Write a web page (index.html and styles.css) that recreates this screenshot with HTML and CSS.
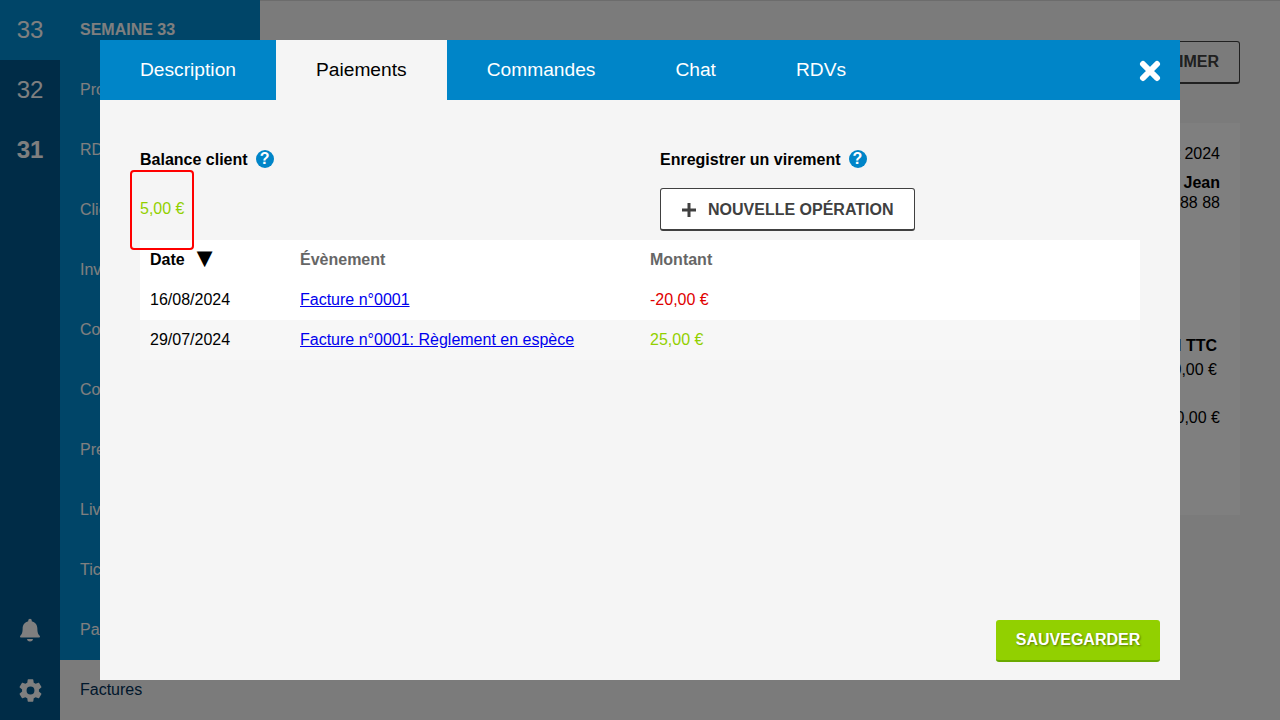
FILE: index.html
```html
<!DOCTYPE html>
<html lang="fr">
<head>
<meta charset="utf-8">
<title>Paiements</title>
<link rel="stylesheet" href="styles.css">
</head>
<body>
<div class="app">
  <aside class="rail">
    <div class="rail-week rail-week-current">33</div>
    <div class="rail-week">32</div>
    <div class="rail-week rail-week-bold">31</div>
    <div class="rail-spacer"></div>
    <div class="rail-icon">
      <svg viewBox="0 0 24 24" width="26" height="26"><path d="M12 1.5a1.6 1.6 0 0 0-1.6 1.6v.8C7.3 4.6 5.2 7.3 5.2 10.6c0 4-.9 5.4-1.9 6.4-.4.4-.5.7-.5 1 0 .6.4 1 1.1 1h16.2c.7 0 1.1-.4 1.1-1 0-.3-.1-.6-.5-1-1-1-1.9-2.4-1.9-6.4 0-3.3-2.1-6-5.200-6.700v-.8A1.600 1.600 0 0 0 12 1.500ZM9.300 20.300a2.700 2.200 0 0 0 5.400 0Z"/></svg>
    </div>
    <div class="rail-icon">
      <svg viewBox="0 0 24 24" width="27" height="27"><path fill-rule="evenodd" d="M12 15.5A3.500 3.500 0 0 1 8.500 12 3.500 3.500 0 0 1 12 8.500a3.500 3.500 0 0 1 3.500 3.500 3.500 3.500 0 0 1-3.500 3.500m7.430-2.530c.04-.32.07-.64.07-.97 0-.33-.03-.66-.07-1l2.110-1.630c.19-.15.24-.42.12-.64l-2-3.460c-.12-.22-.39-.31-.61-.22l-2.490 1c-.52-.39-1.060-.73-1.690-.98l-.37-2.650A.506.506 0 0 0 14 2h-4c-.25 0-.46.18-.5.42l-.37 2.650c-.63.25-1.170.59-1.690.98l-2.490-1c-.22-.09-.49 0-.61.22l-2 3.460c-.13.22-.07.49.12.64L4.570 11c-.04.34-.07.67-.07 1 0 .33.03.65.07.97l-2.110 1.660c-.19.15-.25.42-.12.64l2 3.460c.12.22.39.3.61.22l2.490-1.010c.52.4 1.060.74 1.690.99l.37 2.650c.04.24.25.42.5.42h4c.25 0 .46-.18.5-.42l.37-2.650c.63-.26 1.170-.59 1.690-.99l2.490 1.010c.22.08.49 0 .61-.22l2-3.460c.12-.22.07-.49-.12-.64l-2.110-1.660Z"/></svg>
    </div>
  </aside>
  <nav class="nav">
    <div class="nav-title">SEMAINE 33</div>
    <div class="nav-item">Produits</div>
    <div class="nav-item">RDVs</div>
    <div class="nav-item">Clients</div>
    <div class="nav-item">Inventaire</div>
    <div class="nav-item">Comptes</div>
    <div class="nav-item">Contacts</div>
    <div class="nav-item">Prestations</div>
    <div class="nav-item">Livraisons</div>
    <div class="nav-item">Tickets</div>
    <div class="nav-item">Paiements</div>
    <div class="nav-item nav-item-active">Factures</div>
  </nav>
  <main class="main">
    <div class="toolbar"><button class="ghost-button" type="button">IMPRIMER</button></div>
    <section class="card">
      <div class="card-date">16 août 2024</div>
      <div class="card-name">Dupont Jean</div>
      <div class="card-phone">06 88 88 88 88</div>
      <div class="card-total-label">Total TTC</div>
      <div class="card-total">20,00 €</div>
      <div class="card-paid">20,00 €</div>
    </section>
  </main>
</div>

<div class="overlay">
  <div class="modal">
    <header class="modal-tabs">
      <a class="tab">Description</a>
      <a class="tab tab-active">Paiements</a>
      <a class="tab">Commandes</a>
      <a class="tab">Chat</a>
      <a class="tab">RDVs</a>
      <button class="close" type="button" aria-label="Fermer">
        <svg viewBox="0 0 22 22" width="22" height="22"><path d="M4 4 18 18M18 4 4 18"/></svg>
      </button>
    </header>
    <div class="modal-body">
      <div class="fields">
        <div class="field field-left">
          <div class="field-label">Balance client <span class="help">?</span></div>
          <div class="field-content"><span class="balance">5,00 €</span></div>
        </div>
        <div class="field">
          <div class="field-label">Enregistrer un virement <span class="help">?</span></div>
          <div class="field-content">
            <button class="outline-button" type="button">
              <svg viewBox="0 0 14 14" width="14" height="14"><path d="M7 0v14M0 7h14"/></svg>
              NOUVELLE OPÉRATION
            </button>
          </div>
        </div>
      </div>
      <table class="ops">
        <colgroup><col class="col-date"><col class="col-event"><col></colgroup>
        <thead>
          <tr>
            <th class="th-sorted">Date <span class="sort">▼</span></th>
            <th>Évènement</th>
            <th>Montant</th>
          </tr>
        </thead>
        <tbody>
          <tr>
            <td>16/08/2024</td>
            <td><a class="link" href="#">Facture n°0001</a></td>
            <td class="neg">-20,00 €</td>
          </tr>
          <tr class="row-alt">
            <td>29/07/2024</td>
            <td><a class="link" href="#">Facture n°0001: Règlement en espèce</a></td>
            <td class="pos">25,00 €</td>
          </tr>
        </tbody>
      </table>
    </div>
    <footer class="modal-footer">
      <button class="save" type="button">SAUVEGARDER</button>
    </footer>
  </div>
</div>
</body>
</html>
```
FILE: styles.css
```css
* { box-sizing: border-box; }
html, body { margin: 0; height: 100%; }
body {
  font-family: "Liberation Sans", Arial, sans-serif;
  font-size: 16px;
  color: #000;
  overflow: hidden;
}
button { font-family: inherit; }

.app { display: flex; height: 720px; background: #f6f6f6; }

.rail {
  width: 60px;
  background: #00588f;
  display: flex;
  flex-direction: column;
  color: #fff;
}
.rail-week {
  height: 60px;
  display: flex;
  align-items: center;
  justify-content: center;
  font-size: 24px;
}
.rail-week-current { background: #008ad0; }
.rail-week-bold { font-weight: bold; }
.rail-spacer { flex: 1; }
.rail-icon {
  height: 60px;
  display: flex;
  align-items: center;
  justify-content: center;
}
.rail-icon svg { fill: #fff; }

.nav {
  width: 200px;
  background: #008ad0;
  color: #fff;
  display: flex;
  flex-direction: column;
}
.nav-title, .nav-item {
  height: 60px;
  line-height: 60px;
  padding-left: 20px;
  white-space: nowrap;
}
.nav-title { font-weight: bold; }
.nav-item-active { background: #f6f6f6; color: #003058; }

.main {
  flex: 1;
  border-top: 1px solid #d8d8d8;
  padding: 40px 40px 0 0;
  display: flex;
  flex-direction: column;
  align-items: flex-end;
}
.toolbar { height: 43px; margin-bottom: 39px; }
.ghost-button {
  height: 43px;
  padding: 0 20px;
  background: transparent;
  border: 1px solid #404040;
  border-bottom-width: 2px;
  border-radius: 3px;
  color: #404040;
  font-size: 16px;
  font-weight: bold;
}
.card {
  width: 900px;
  height: 392px;
  background: #fff;
  padding: 22px 20px 20px;
  text-align: right;
  line-height: 18px;
}
.card-name { font-weight: bold; margin-top: 11px; }
.card-phone { margin-top: 2px; }
.card-total-label { font-weight: bold; margin: 125px 3px 0 0; }
.card-total { margin: 6px 3px 0 0; }
.card-paid { margin-top: 30px; }

.overlay {
  position: fixed;
  inset: 0;
  background: rgba(0, 0, 0, 0.5);
  padding: 40px 100px;
  display: flex;
}
.modal {
  flex: 1;
  min-width: 0;
  background: #f5f5f5;
  display: flex;
  flex-direction: column;
}
.modal-tabs {
  height: 60px;
  background: #0085c8;
  display: flex;
  position: relative;
}
.tab {
  padding: 0 40px;
  line-height: 60px;
  font-size: 19.2px;
  color: #fff;
}
.tab-active { background: #f5f5f5; color: #000; }
.close {
  position: absolute;
  right: 19px;
  top: 20px;
  width: 22px;
  height: 22px;
  padding: 0;
  border: 0;
  background: none;
}
.close svg { display: block; fill: none; stroke: #fff; stroke-width: 6; stroke-linecap: round; }

.modal-body { flex: 1; padding: 40px 40px 0; }
.fields { display: flex; height: 100px; }
.field { flex: 1; min-width: 0; }
.field-left { flex: 0 0 520px; }
.field-label {
  height: 40px;
  line-height: 40px;
  font-weight: bold;
  display: flex;
  align-items: center;
  gap: 8px;
}
.help {
  position: relative;
  top: -1px;
  width: 18px;
  height: 18px;
  border-radius: 50%;
  background: #0085c8;
  color: #fff;
  font-size: 16px;
  line-height: 18px;
  text-align: center;
  font-weight: bold;
}
.field-content { margin-top: 8px; height: 43px; }
.balance {
  display: inline-block;
  position: relative;
  line-height: 41px;
  color: #92d000;
}
.balance::after {
  content: "";
  position: absolute;
  top: -18px;
  bottom: -21px;
  left: -10px;
  right: -10px;
  border: 2px solid #f00;
  border-radius: 4px;
}
.outline-button {
  height: 43px;
  padding: 2px 20px 0 21px;
  background: #fff;
  border: 1px solid #404040;
  border-bottom-width: 2px;
  border-radius: 3px;
  color: #404040;
  font-size: 16px;
  font-weight: bold;
  display: inline-flex;
  align-items: center;
  gap: 12px;
}
.outline-button svg { fill: none; stroke: #404040; stroke-width: 3; }

.ops {
  width: 100%;
  border-collapse: collapse;
  table-layout: fixed;
  background: #fff;
}
.col-date { width: 150px; }
.col-event { width: 350px; }
.ops th, .ops td {
  height: 40px;
  padding: 0 10px;
  text-align: left;
  font-weight: normal;
}
.ops th { font-weight: bold; color: #666; }
.ops th.th-sorted { color: #000; }
.sort { font-size: 27px; margin-left: 2px; line-height: 0; vertical-align: -2px; }
.row-alt { background: #f7f7f7; }
.link { color: #00e; }
.neg { color: #e00000; }
.pos { color: #92d000; }

.modal-footer {
  display: flex;
  justify-content: flex-end;
  padding: 0 20px 18px;
}
.save {
  width: 164px;
  height: 42px;
  background: #92d000;
  border: 0;
  border-bottom: 2px solid #6aaa00;
  border-radius: 3px;
  color: #fff;
  font-size: 16px;
  font-weight: bold;
  text-shadow: 1px 1px 2px rgba(0, 0, 0, 0.4);
}
```
